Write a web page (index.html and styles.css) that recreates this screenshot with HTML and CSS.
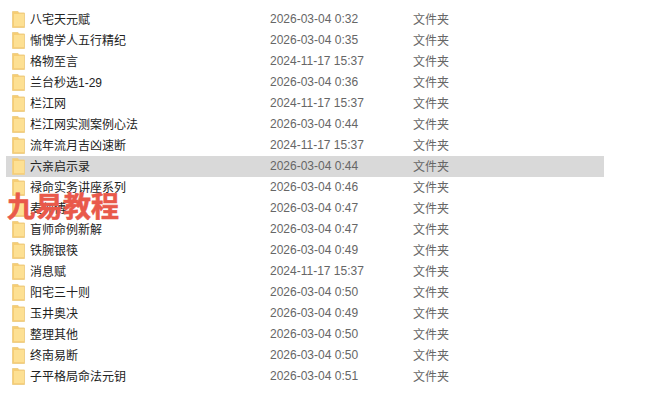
FILE: index.html
```html
<!DOCTYPE html>
<html lang="zh-CN">
<head>
  <meta charset="UTF-8" />
  <title>文件夹</title>
  <link rel="stylesheet" href="styles.css">
</head>
<body>

  <svg class="defs" width="0" height="0">
    <symbol id="folder" viewBox="0 0 13 17">
      <path d="M0.5 0.5 H6 L7 2 H12.5 V16.5 H0.5 Z" fill="#f6cd74" stroke="#efd08a" />
      <path d="M2 3 H12 V16 H2 Z" fill="#fde093" />
      <path d="M2 15 H12 V16 H2 Z" fill="#f7cf7c" />
    </symbol>
  </svg>

  <!-- Lista de carpetas -->
  <ul class="file-list">
    <li class="file-row"><svg class="folder"><use href="#folder" /></svg><span class="name">八宅天元赋</span><span class="date">2026-03-04 0:32</span><span class="type">文件夹</span></li>
    <li class="file-row"><svg class="folder"><use href="#folder" /></svg><span class="name">惭愧学人五行精纪</span><span class="date">2026-03-04 0:35</span><span class="type">文件夹</span></li>
    <li class="file-row"><svg class="folder"><use href="#folder" /></svg><span class="name">格物至言</span><span class="date">2024-11-17 15:37</span><span class="type">文件夹</span></li>
    <li class="file-row"><svg class="folder"><use href="#folder" /></svg><span class="name">兰台秒选1-29</span><span class="date">2026-03-04 0:36</span><span class="type">文件夹</span></li>
    <li class="file-row"><svg class="folder"><use href="#folder" /></svg><span class="name">栏江网</span><span class="date">2024-11-17 15:37</span><span class="type">文件夹</span></li>
    <li class="file-row"><svg class="folder"><use href="#folder" /></svg><span class="name">栏江网实测案例心法</span><span class="date">2026-03-04 0:44</span><span class="type">文件夹</span></li>
    <li class="file-row"><svg class="folder"><use href="#folder" /></svg><span class="name">流年流月吉凶速断</span><span class="date">2024-11-17 15:37</span><span class="type">文件夹</span></li>
    <li class="file-row selected"><svg class="folder"><use href="#folder" /></svg><span class="name">六亲启示录</span><span class="date">2026-03-04 0:44</span><span class="type">文件夹</span></li>
    <li class="file-row"><svg class="folder"><use href="#folder" /></svg><span class="name">禄命实务讲座系列</span><span class="date">2026-03-04 0:46</span><span class="type">文件夹</span></li>
    <li class="file-row"><svg class="folder"><use href="#folder" /></svg><span class="name">麦师傅</span><span class="date">2026-03-04 0:47</span><span class="type">文件夹</span></li>
    <li class="file-row"><svg class="folder"><use href="#folder" /></svg><span class="name">盲师命例新解</span><span class="date">2026-03-04 0:47</span><span class="type">文件夹</span></li>
    <li class="file-row"><svg class="folder"><use href="#folder" /></svg><span class="name">铁腕银筷</span><span class="date">2026-03-04 0:49</span><span class="type">文件夹</span></li>
    <li class="file-row"><svg class="folder"><use href="#folder" /></svg><span class="name">消息赋</span><span class="date">2024-11-17 15:37</span><span class="type">文件夹</span></li>
    <li class="file-row"><svg class="folder"><use href="#folder" /></svg><span class="name">阳宅三十则</span><span class="date">2026-03-04 0:50</span><span class="type">文件夹</span></li>
    <li class="file-row"><svg class="folder"><use href="#folder" /></svg><span class="name">玉井奥决</span><span class="date">2026-03-04 0:49</span><span class="type">文件夹</span></li>
    <li class="file-row"><svg class="folder"><use href="#folder" /></svg><span class="name">整理其他</span><span class="date">2026-03-04 0:50</span><span class="type">文件夹</span></li>
    <li class="file-row"><svg class="folder"><use href="#folder" /></svg><span class="name">终南易断</span><span class="date">2026-03-04 0:50</span><span class="type">文件夹</span></li>
    <li class="file-row"><svg class="folder"><use href="#folder" /></svg><span class="name">子平格局命法元钥</span><span class="date">2026-03-04 0:51</span><span class="type">文件夹</span></li>
  </ul>

  <!-- Marca de agua -->
  <div class="watermark">九易教程</div>

</body>
</html>
```

FILE: styles.css
```css
body {
  font-family: "Liberation Sans", "Noto Sans CJK SC", sans-serif;
  background: white;
  margin: 0;
  padding: 0;
  width: 658px;
  height: 414px;
  overflow: hidden;
  position: relative;
}

.defs {
  position: absolute;
}

.file-list {
  list-style: none;
  width: 598px;
  margin: 0 0 0 6px;
  padding: 9px 0 0 0;
}

.file-row {
  display: flex;
  align-items: center;
  height: 21px;
  font-size: 12px;
}

.selected {
  background-color: #d9d9d9;
}

.folder {
  width: 13px;
  height: 17px;
  margin-left: 6px;
  flex: none;
}

.name,
.date,
.type {
  padding-bottom: 2px;
}

.name {
  width: 240px;
  margin-left: 5px;
  color: #222;
}

.date {
  width: 143px;
  color: #666;
}

.type {
  color: #666;
}

.watermark {
  position: absolute;
  top: 192px;
  left: 7px;
  font-size: 28px;
  line-height: 32px;
  font-weight: bold;
  color: #e9594a;
  -webkit-text-stroke: 0.6px #e9594a;
}
```
